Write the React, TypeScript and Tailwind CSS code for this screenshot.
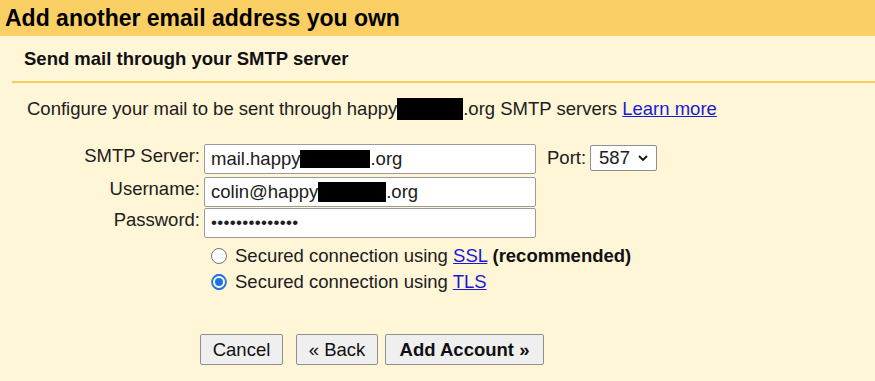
import React from "react";

function Redacted({ w, h }: { w: string; h: string }) {
  return <span className={`inline-block bg-black align-middle ${w} ${h}`} />;
}

function FakeInput({ children }: { children: React.ReactNode }) {
  return (
    <div className="flex h-[30px] w-[332px] items-center rounded-[2px] border border-[#9a9a9a] bg-white pl-[6px] text-[18.5px] text-[#202020]">
      {children}
    </div>
  );
}

function Radio({ checked }: { checked?: boolean }) {
  return (
    <span className="flex h-[16px] w-[16px] items-center justify-center rounded-full border border-[#767676] bg-white">
      {checked && (
        <span className="flex h-[16px] w-[16px] items-center justify-center rounded-full bg-[#1a73e8]">
          <span className="h-[12px] w-[12px] rounded-full border-[2px] border-white bg-[#1a73e8]" />
        </span>
      )}
    </span>
  );
}

function Button({ children, bold }: { children: React.ReactNode; bold?: boolean }) {
  return (
    <button
      className={`h-[31px] rounded-[2px] border border-[#8f8f8f] bg-[#efefef] text-[18.5px] text-[#111] ${
        bold ? "font-bold" : ""
      }`}
    >
      {children}
    </button>
  );
}

export default function App() {
  return (
    <div className="h-[381px] w-[875px] overflow-hidden bg-[#fff5d7] font-['Liberation_Sans',Arial,sans-serif] text-[#202020]">
      <div className="flex h-[36px] items-center bg-[#fad064] pl-[5px]">
        <h1 className="text-[23px] font-bold leading-none text-black">Add another email address you own</h1>
      </div>

      <div className="flex h-[45px] items-center pl-[24px] pt-[1px]">
        <h2 className="text-[18.5px] font-bold leading-none text-[#111]">Send mail through your SMTP server</h2>
      </div>
      <div className="ml-[12px] h-[2px] bg-[#f6cd62]" />

      <p className="mt-[15px] flex items-center pl-[27px] text-[18.5px] leading-[22px]">
        Configure your mail to be sent through happy
        <Redacted w="w-[66px]" h="h-[22px]" />
        .org SMTP servers&nbsp;
        <a className="text-[#1a1ad6] underline">Learn more</a>
      </p>

      <div className="mt-[24px] flex">
        <div className="flex flex-col">
          <div className="flex items-start">
            <label className="w-[200px] pt-[1px] text-right text-[18.5px] leading-[22px]">SMTP Server:</label>
            <div className="ml-[4px]">
              <FakeInput>
                mail.happy
                <Redacted w="w-[70px]" h="h-[18px]" />
                .org
              </FakeInput>
            </div>
            <label className="ml-[11px] pt-[3px] text-[18.5px] leading-[22px]">Port:</label>
            <div className="ml-[4px] mt-[1px] flex h-[26px] w-[67px] items-center rounded-[2px] border border-[#8f8f8f] bg-white pl-[8px] text-[18.5px]">
              587
              <svg className="ml-[7px]" width="12" height="12" viewBox="0 0 12 12">
                <path d="M2 4l4 4 4-4" fill="none" stroke="#111" strokeWidth="1.8" />
              </svg>
            </div>
          </div>

          <div className="mt-[3px] flex items-start">
            <label className="w-[200px] pt-[1px] text-right text-[18.5px] leading-[22px]">Username:</label>
            <div className="ml-[4px]">
              <FakeInput>
                colin@happy
                <Redacted w="w-[68px]" h="h-[20px]" />
                .org
              </FakeInput>
            </div>
          </div>

          <div className="mt-[1px] flex items-start">
            <label className="w-[200px] pt-[1px] text-right text-[18.5px] leading-[22px]">Password:</label>
            <div className="ml-[4px]">
              <FakeInput>
                <span className="text-[17px] tracking-[0.3px]">••••••••••••••</span>
              </FakeInput>
            </div>
          </div>

          <div className="ml-[211px] mt-[7px] flex flex-col gap-[4px] text-[18.5px] leading-[22px]">
            <div className="flex items-center gap-[8px]">
              <Radio />
              <span>
                Secured connection using <a className="text-[#1a1ad6] underline">SSL</a>{" "}
                <b className="text-[#111]">(recommended)</b>
              </span>
            </div>
            <div className="flex items-center gap-[8px]">
              <Radio checked />
              <span>
                Secured connection using <a className="text-[#1a1ad6] underline">TLS</a>
              </span>
            </div>
          </div>

          <div className="ml-[200px] mt-[41px] flex">
            <Button>
              <span className="block w-[81px]">Cancel</span>
            </Button>
            <div className="ml-[13px]">
              <Button>
                <span className="block w-[80px]">« Back</span>
              </Button>
            </div>
            <div className="ml-[7px]">
              <Button bold>
                <span className="block w-[157px]">Add Account »</span>
              </Button>
            </div>
          </div>
        </div>
      </div>
    </div>
  );
}
